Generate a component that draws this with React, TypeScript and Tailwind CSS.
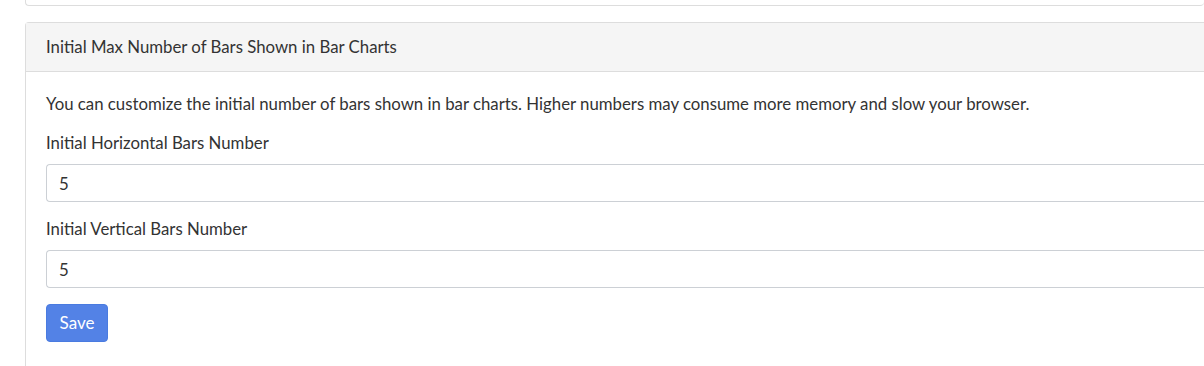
export default function App() {
  return (
    <div
      className="min-h-[366px] bg-white pl-[25px] text-[16.8px] text-[#333]"
      style={{ fontFamily: "Lato, 'Noto Sans', sans-serif" }}
    >
      {/* 위쪽 카드 (끝부분만 보임) */}
      <div className="-mt-[20px] h-[26px] rounded-b-[4px] border border-[#ddd] border-r-0" />

      {/* 막대 수 설정 카드 */}
      <div className="mt-[16px] rounded-tl-[4px] border border-r-0 border-b-0 border-[#ddd]">
        <div className="flex h-[49px] items-center border-b border-[#ddd] bg-[#f5f5f5] pl-[20px]">
          Initial Max Number of Bars Shown in Bar Charts
        </div>
        <div className="flex flex-col pl-[20px] pb-[24px]">
          <p className="mt-[20px] leading-[24px]">
            You can customize the initial number of bars shown in bar charts. Higher numbers may consume more memory
            and slow your browser.
          </p>
          <label className="mt-[15px] leading-[24px]">Initial Horizontal Bars Number</label>
          <input
            readOnly
            value="5"
            className="mt-[9px] h-[38px] rounded-l-[4px] border border-r-0 border-[#ccd0d5] px-[12px] text-[16.8px] text-[#333] outline-none"
          />
          <label className="mt-[15px] leading-[24px]">Initial Vertical Bars Number</label>
          <input
            readOnly
            value="5"
            className="mt-[9px] h-[38px] rounded-l-[4px] border border-r-0 border-[#ccd0d5] px-[12px] text-[16.8px] text-[#333] outline-none"
          />
          <div className="mt-[16px]">
            <button className="h-[38px] w-[62px] rounded-[4px] border border-[#4a7be0] bg-[#5382e6] text-[17px] text-white">
              Save
            </button>
          </div>
        </div>
      </div>
    </div>
  );
}
